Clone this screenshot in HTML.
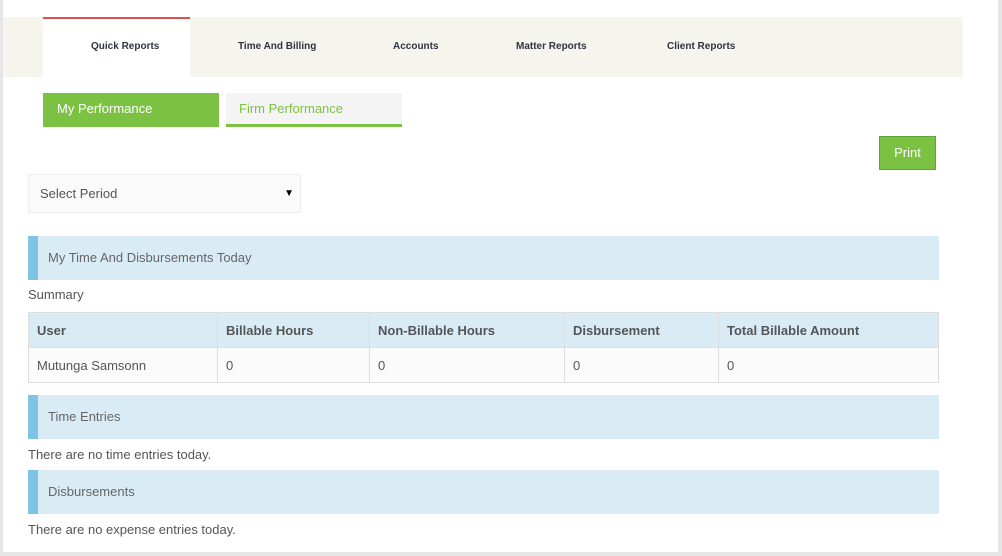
<!DOCTYPE html>
<html><head><style>
body{margin:0;width:1002px;height:556px;background:#fff;font-family:"Liberation Sans",sans-serif;position:relative;overflow:hidden;color:#555}
.a{position:absolute}
.nav{left:3px;top:17px;width:960px;height:60px;background:#f5f5ee}
.nt{font-size:10px;font-weight:bold;color:#2e3440;top:41px}
.bar{left:28px;width:911px;height:44px;background:#d9ecf5;border-left:10px solid #7fc4e6;box-sizing:border-box;font-size:13px;color:#666;line-height:44px;padding-left:10px}
table{position:absolute;left:28px;top:312px;width:911px;border-collapse:collapse;font-size:13px}
td{border:1px solid #ddd;height:34px;padding:0 8px;color:#555}
tr:first-child td{background:#d9ecf5;font-weight:bold}
tr:last-child td{background:#fbfbfb}
</style></head><body>
<div class="a" style="left:0;top:0;width:3px;height:556px;background:#e6e6e6"></div>
<div class="a" style="left:998px;top:0;width:4px;height:556px;background:#e6e6e6"></div>
<div class="a" style="left:0;top:552px;width:1002px;height:4px;background:#e6e6e6"></div>
<div class="a nav"></div>
<div class="a" style="left:43px;top:17px;width:147px;height:60px;background:#fff;border-top:2px solid #e05050;box-sizing:border-box"></div>
<div class="a nt" style="left:91px">Quick Reports</div>
<div class="a nt" style="left:238px">Time And Billing</div>
<div class="a nt" style="left:393px">Accounts</div>
<div class="a nt" style="left:516px">Matter Reports</div>
<div class="a nt" style="left:667px">Client Reports</div>
<div class="a" style="left:43px;top:93px;width:176px;height:34px;background:#7cc242;color:#fff;font-size:13px;line-height:31px;padding-left:14px;box-sizing:border-box">My Performance</div>
<div class="a" style="left:226px;top:93px;width:176px;height:34px;background:#f4f4f4;border-bottom:3px solid #7cc242;color:#7cc242;font-size:13px;line-height:31px;padding-left:13px;box-sizing:border-box">Firm Performance</div>
<div class="a" style="left:879px;top:136px;width:57px;height:34px;background:#7cc242;border:1px solid #5aa63a;box-sizing:border-box;color:#fff;font-size:13px;line-height:32px;text-align:center">Print</div>
<div class="a" style="left:28px;top:174px;width:273px;height:39px;background:#fafafa;border:1px solid #eee;box-sizing:border-box;font-size:13px;line-height:37px;padding-left:11px;color:#555">Select Period<span style="position:absolute;right:6px;font-size:10px;color:#000">▼</span></div>
<div class="a bar" style="top:236px">My Time And Disbursements Today</div>
<div class="a" style="left:28px;top:287px;font-size:13px">Summary</div>
<table><tr><td style="width:172px">User</td><td style="width:135px">Billable Hours</td><td style="width:178px">Non-Billable Hours</td><td style="width:137px">Disbursement</td><td>Total Billable Amount</td></tr>
<tr><td>Mutunga Samsonn</td><td>0</td><td>0</td><td>0</td><td>0</td></tr></table>
<div class="a bar" style="top:395px">Time Entries</div>
<div class="a" style="left:28px;top:447px;font-size:13px">There are no time entries today.</div>
<div class="a bar" style="top:470px">Disbursements</div>
<div class="a" style="left:28px;top:522px;font-size:13px">There are no expense entries today.</div>
</body></html>
